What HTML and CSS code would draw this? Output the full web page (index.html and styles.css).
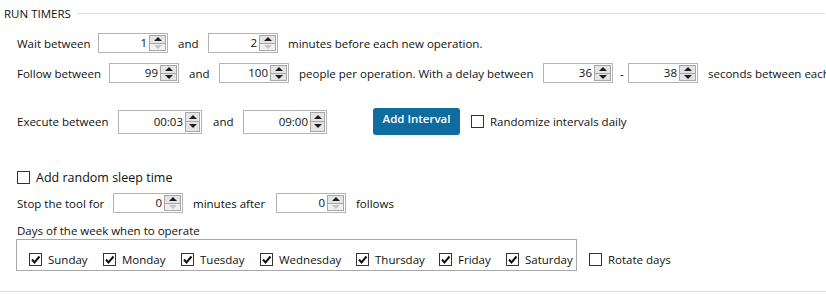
FILE: index.html
```html
<!DOCTYPE html>
<html>
<head>
	<meta charset="UTF-8">
	<title>Run Timers</title>
<link rel="stylesheet" href="styles.css">
</head>
<body>
<div class="panel">
	<div class="legend"><span>RUN TIMERS</span><i class="rule"></i></div>

	<div class="content">
	<div class="row row-wait">
		<span>Wait between</span>
		<div class="spin"><span class="val">1</span><span class="arrows"><b class="up"></b><b class="down off"></b></span></div>
		<span>and</span>
		<div class="spin"><span class="val">2</span><span class="arrows"><b class="up"></b><b class="down off"></b></span></div>
		<span>minutes before each new operation.</span>
	</div>

	<div class="row row-follow">
		<span>Follow between</span>
		<div class="spin"><span class="val">99</span><span class="arrows"><b class="up"></b><b class="down"></b></span></div>
		<span>and</span>
		<div class="spin"><span class="val">100</span><span class="arrows"><b class="up"></b><b class="down"></b></span></div>
		<span>people per operation. With a delay between</span>
		<div class="spin"><span class="val">36</span><span class="arrows"><b class="up"></b><b class="down"></b></span></div>
		<span>-</span>
		<div class="spin"><span class="val">38</span><span class="arrows"><b class="up"></b><b class="down"></b></span></div>
		<span>seconds between each</span>
	</div>

	<div class="row row-exec">
		<span>Execute between</span>
		<div class="spin time"><span class="val">00:03</span><span class="arrows"><b class="up"></b><b class="down"></b></span></div>
		<span>and</span>
		<div class="spin time"><span class="val">09:00</span><span class="arrows"><b class="up"></b><b class="down"></b></span></div>
		<button type="button" class="btn">Add Interval</button>
		<label class="check"><span class="box"></span>Randomize intervals daily</label>
	</div>

	<div class="row-sleep">
		<label class="check"><span class="box"></span>Add random sleep time</label>
	</div>

	<div class="row row-stop">
		<span>Stop the tool for</span>
		<div class="spin"><span class="val">0</span><span class="arrows"><b class="up"></b><b class="down off"></b></span></div>
		<span>minutes after</span>
		<div class="spin"><span class="val">0</span><span class="arrows"><b class="up"></b><b class="down off"></b></span></div>
		<span>follows</span>
	</div>

	<div class="days-title">Days of the week when to operate</div>
	<div class="days-row">
		<div class="days">
			<label class="check"><span class="box on"><svg viewBox="0 0 11 11"><path d="M2 5.5 L4.5 8.5 L9.5 2.5"/></svg></span>Sunday</label>
			<label class="check"><span class="box on"><svg viewBox="0 0 11 11"><path d="M2 5.5 L4.5 8.5 L9.5 2.5"/></svg></span>Monday</label>
			<label class="check"><span class="box on"><svg viewBox="0 0 11 11"><path d="M2 5.5 L4.5 8.5 L9.5 2.5"/></svg></span>Tuesday</label>
			<label class="check"><span class="box on"><svg viewBox="0 0 11 11"><path d="M2 5.5 L4.5 8.5 L9.5 2.5"/></svg></span>Wednesday</label>
			<label class="check"><span class="box on"><svg viewBox="0 0 11 11"><path d="M2 5.5 L4.5 8.5 L9.5 2.5"/></svg></span>Thursday</label>
			<label class="check"><span class="box on"><svg viewBox="0 0 11 11"><path d="M2 5.5 L4.5 8.5 L9.5 2.5"/></svg></span>Friday</label>
			<label class="check"><span class="box on"><svg viewBox="0 0 11 11"><path d="M2 5.5 L4.5 8.5 L9.5 2.5"/></svg></span>Saturday</label>
		</div>
		<label class="check rotate"><span class="box"></span>Rotate days</label>
	</div>
	</div>

	<div class="bottom-rule"></div>
</div>
</body>
</html>
```

FILE: styles.css
```css
* {
	box-sizing: border-box;
}
html, body {
	overflow: hidden;
}
body {
	margin: 0;
	background: #fff;
	color: #111;
	font-family: "Open Sans", "Noto Sans", sans-serif;
	font-size: 11.5px;
}
.legend {
	display: flex;
	align-items: center;
	height: 26px;
	padding-left: 4px;
}
.legend .rule {
	flex: 1;
	border-top: 1px solid #dcdcdc;
	margin-left: 6px;
	margin-right: 1px;
}
.content {
	padding-left: 17px;
}
.row {
	display: grid;
	align-items: center;
	justify-items: start;
	white-space: nowrap;
}
.row-wait {
	margin-top: 7px;
	height: 20px;
	grid-template-columns: 81px 80px 30px 80px auto;
}
.row-follow {
	margin-top: 10px;
	height: 20px;
	grid-template-columns: 92px 80px 30px 80px 244px 77px 8px 80px auto;
}
.row-exec {
	margin-top: 25px;
	height: 27px;
	grid-template-columns: 101px 95px 30px 130px 98px auto;
}
.row-sleep {
	margin-top: 32px;
	height: 20px;
	display: flex;
	align-items: center;
	font-size: 12.5px;
}
.row-stop {
	margin-top: 6px;
	height: 20px;
	grid-template-columns: 96px 80px 83px 80px auto;
}

/* numeric up-down */
.spin {
	display: flex;
	width: 70px;
	height: 20px;
	padding: 1px;
	border: 1px solid #b4b4b4;
	background: #fff;
}
.spin .val {
	flex: 1;
	text-align: right;
	padding-right: 2px;
	line-height: 16px;
}
.spin .arrows {
	width: 17px;
	display: flex;
	flex-direction: column;
	border: 1px solid #a6a6a6;
	background: #e4e4e4;
}
.arrows b {
	flex: 1;
	display: flex;
	align-items: center;
	justify-content: center;
}
.arrows b + b {
	border-top: 1px solid #a6a6a6;
}
.up::before,
.down::before {
	content: "";
	border-left: 4px solid transparent;
	border-right: 4px solid transparent;
}
.up::before {
	border-bottom: 4px solid #1e1e1e;
}
.down::before {
	border-top: 4px solid #1e1e1e;
}
.arrows .off {
	background: #f0f0f0;
}
.off::before {
	border-top-color: #c4c4c4;
}
.spin.time {
	width: 84px;
	height: 24px;
}
.spin.time .val {
	line-height: 20px;
}
.spin.time .arrows {
	width: 15px;
}

.btn {
	width: 87px;
	height: 27px;
	border: none;
	border-radius: 3px;
	background: #0f6c9e;
	color: #fff;
	font: inherit;
	font-weight: 600;
	padding: 0 0 6px;
}

/* checkboxes */
.check {
	display: inline-flex;
	align-items: center;
	white-space: nowrap;
}
.box {
	width: 13px;
	height: 13px;
	margin-right: 6px;
	border: 1px solid #333;
	background: #fff;
	display: inline-flex;
	align-items: center;
	justify-content: center;
}
.box svg {
	width: 11px;
	height: 11px;
	fill: none;
	stroke: #111;
	stroke-width: 2;
}

.days-title {
	margin-top: 10px;
	height: 16px;
	line-height: 16px;
}
.days-row {
	display: flex;
	align-items: center;
	margin-left: -1px;
}
.days {
	display: grid;
	grid-template-columns: 74px 78px 79px 96px 83px 67px auto;
	align-items: center;
	width: 561px;
	height: 32px;
	padding: 8px 0 0 12px;
	border: 1px solid #a9a9a9;
}
.rotate {
	margin-left: 12px;
	padding-top: 8px;
}
.bottom-rule {
	margin-top: 20px;
	border-top: 1px solid #dcdcdc;
}
```
